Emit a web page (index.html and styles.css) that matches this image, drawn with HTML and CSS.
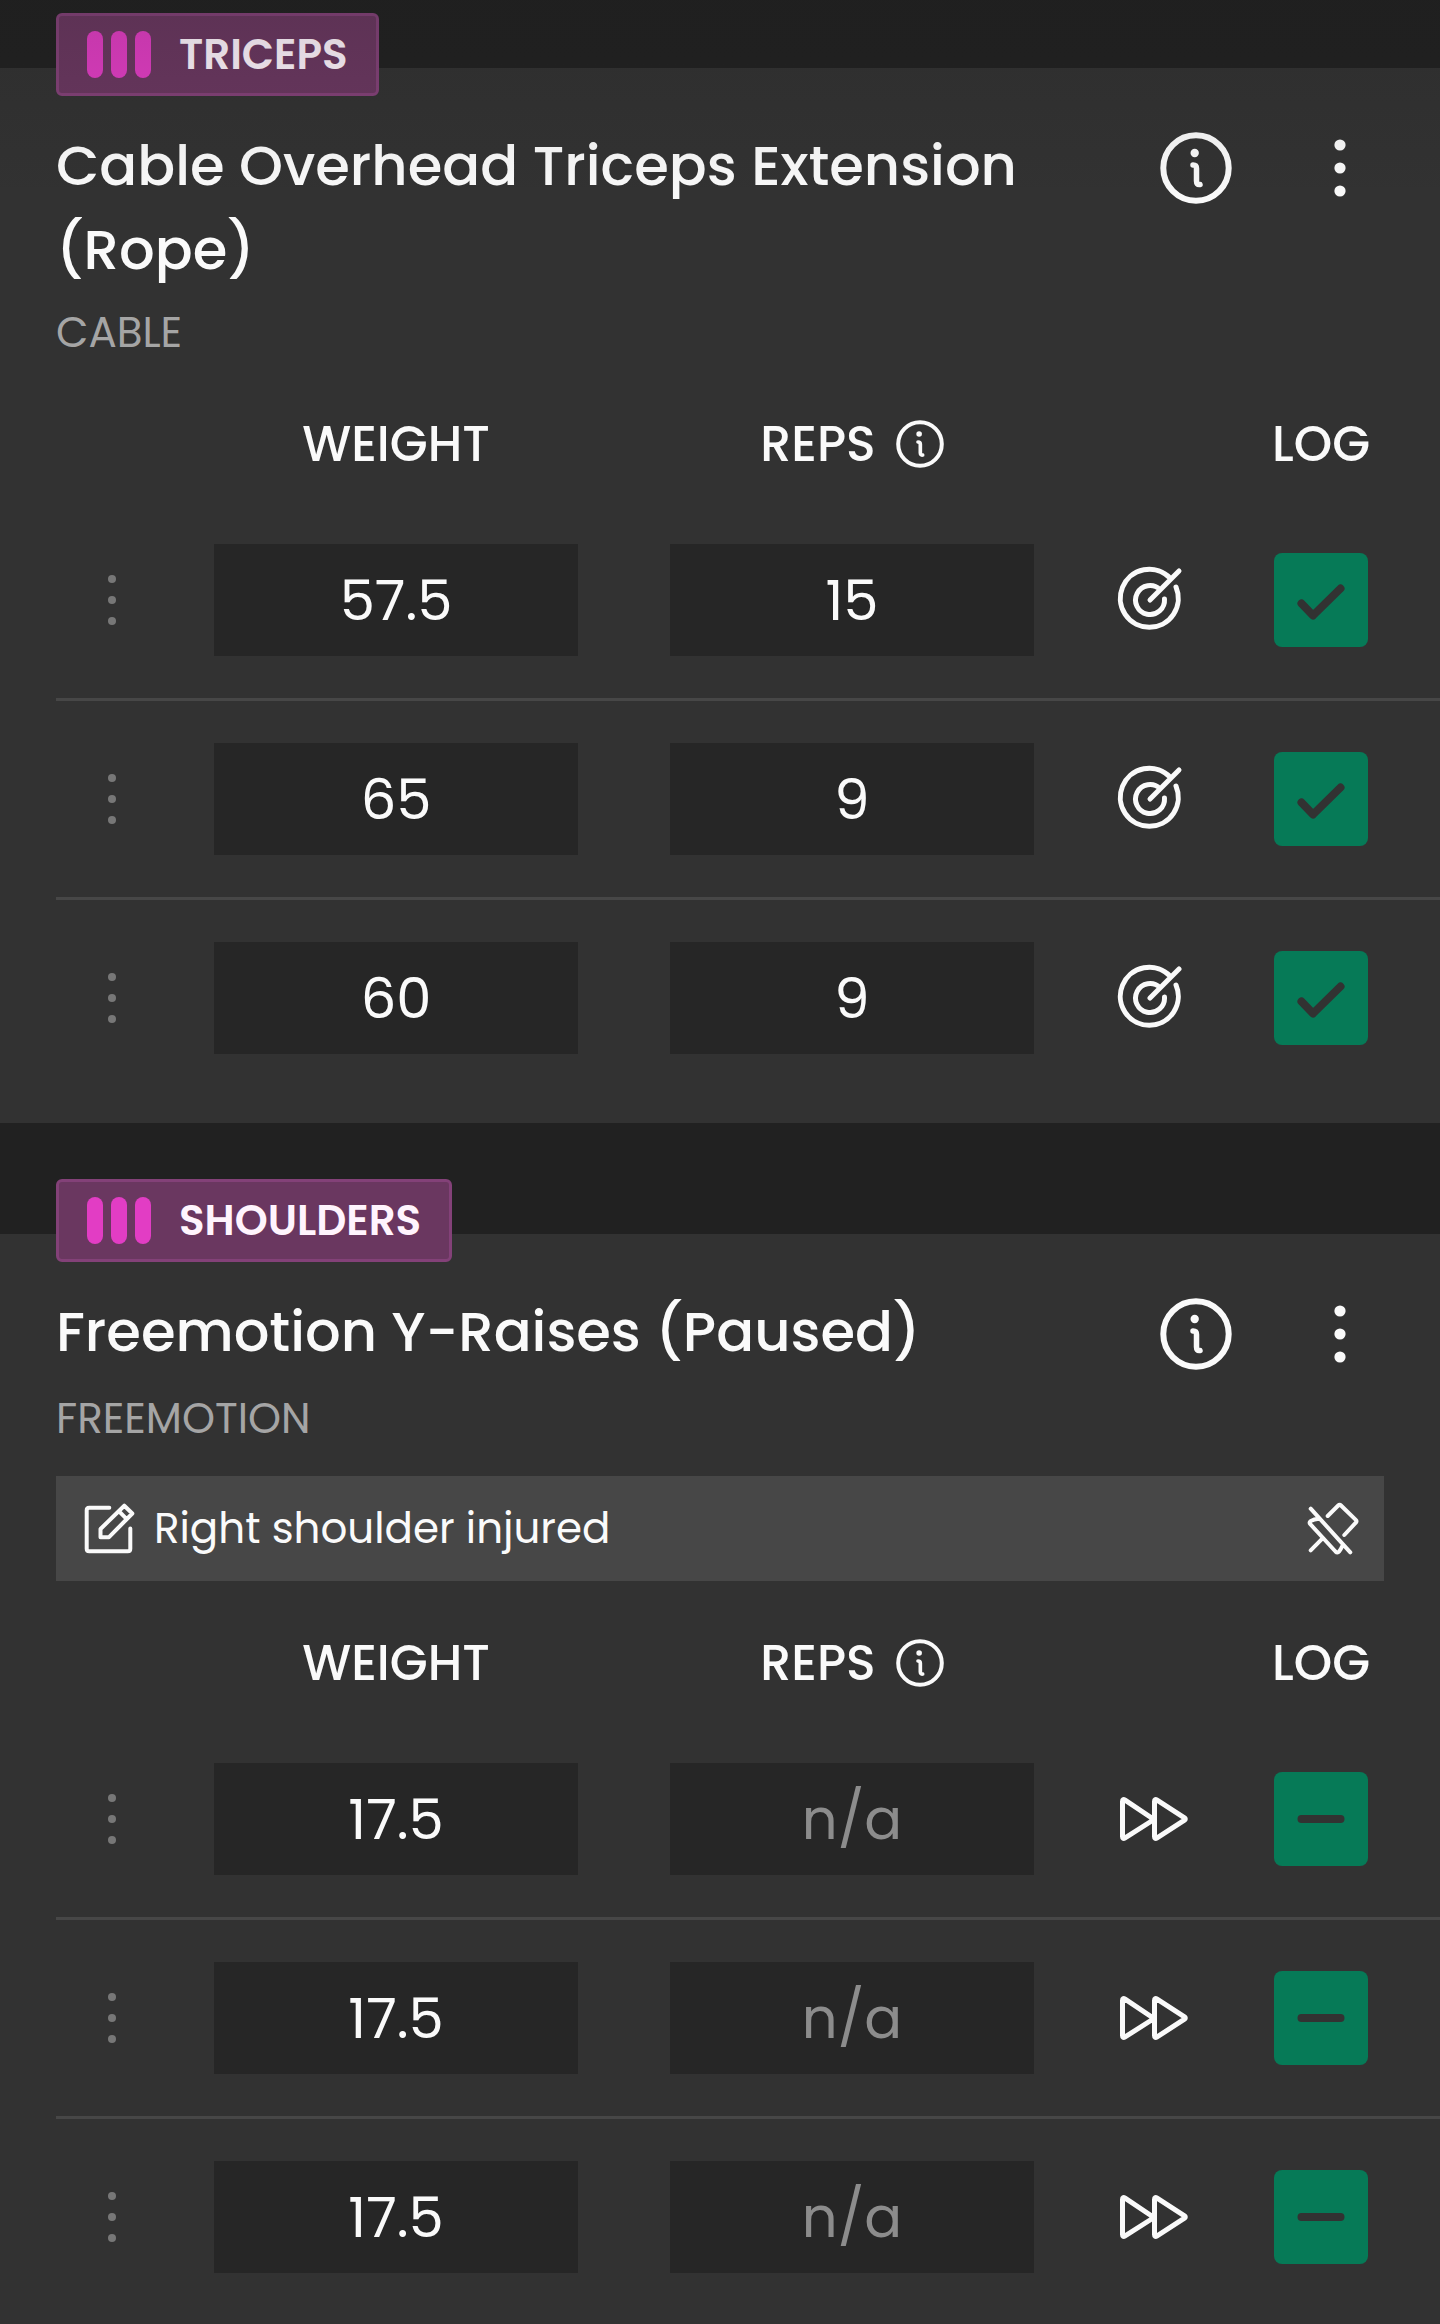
FILE: index.html
```html
<!DOCTYPE html>
<html lang="en">
<head>
    <meta charset="UTF-8">
    <meta name="viewport" content="width=device-width, initial-scale=1.0">
    <title>Workout</title>
    <link rel="stylesheet" href="styles.css">
</head>
<body>
    <!-- Icon sprite -->
    <svg class="sprite" aria-hidden="true">
        <symbol id="info" viewBox="0 0 72 72">
            <circle cx="36" cy="36" r="32.7" stroke-width="6"/>
            <circle cx="34.7" cy="21" r="4.2" fill="currentColor" stroke="none"/>
            <path d="M33 33c2.500 0 3.500.8 3.500 3.500v12.500c0 2.500 1 4 3.500 3.500" stroke-width="5.500"/>
        </symbol>
        <symbol id="dots" viewBox="0 0 72 72">
            <g fill="currentColor" stroke="none">
                <circle cx="36" cy="13" r="5.600"/>
                <circle cx="36" cy="36" r="5.600"/>
                <circle cx="36" cy="59" r="5.600"/>
            </g>
        </symbol>
        <symbol id="target" viewBox="0 0 80 80">
            <path d="M60 18A29 29 0 1 0 66 27M50 29.500A14.500 14.500 0 1 0 54.500 39M40 40L69 11" stroke-width="5"/>
        </symbol>
        <symbol id="forward" viewBox="0 0 80 80">
            <path d="M12.500 22.500v35q0 3 2.600 1.400L44 40.500 15.100 21.100q-2.600-1.600-2.600 1.400zM44.500 22.500v35q0 3 2.600 1.400L74.500 41.200q1.600-1.200 0-2.400L47.100 21.100q-2.600-1.600-2.600 1.400z" stroke-width="5"/>
        </symbol>
        <symbol id="check" viewBox="0 0 94 94">
            <path d="M27.500 50.500L39 62.500 66.500 35.500" stroke-width="8"/>
        </symbol>
        <symbol id="minus" viewBox="0 0 94 94">
            <path d="M27.500 47h39" stroke-width="8"/>
        </symbol>
        <symbol id="edit" viewBox="0 0 56 56">
            <path d="M29.300 6.700H9.200q-2.500 0-2.500 2.500v38.600q0 2.500 2.500 2.500h38.600q2.500 0 2.500-2.500V27.500M44.300 4.700l8 7.800L29 36.200H20.500V28zM38.800 10.200l8 8" stroke-width="4"/>
        </symbol>
        <symbol id="unpin" viewBox="0 0 56 56">
            <path d="M6.700 7.700L46.300 51.300M23.700 15L34.200 4.500q1.400-1.400 2.800 0L51.800 18.900q1.500 1.400 0 2.800L40.300 34M15 17.700q-5 .2-8.500 2.500-1.700 1.400-.2 3L31.500 50.500q2 2 3.600 0Q37 48 38.300 45M18.300 37.700L6.700 49.300" stroke-width="4"/>
        </symbol>
    </svg>

    <main class="workout">
        <section class="card">
            <div class="badge">
                <span class="bars"><i></i><i></i><i></i></span>
                <span>TRICEPS</span>
            </div>
            <div class="card-header">
                <h2>Cable Overhead Triceps Extension (Rope)</h2>
                <div class="actions">
                    <button type="button" aria-label="Exercise info"><svg class="icon"><use href="#info"/></svg></button>
                    <button type="button" aria-label="More options"><svg class="icon"><use href="#dots"/></svg></button>
                </div>
            </div>
            <p class="equipment">CABLE</p>
            <table class="sets">
                <thead>
                    <tr>
                        <th class="col-handle"></th>
                        <th>WEIGHT</th>
                        <th><span class="reps-head">REPS <button type="button" aria-label="Reps info"><svg class="icon-small"><use href="#info"/></svg></button></span></th>
                        <th class="col-status"></th>
                        <th class="col-log">LOG</th>
                    </tr>
                </thead>
                <tbody>
                    <tr>
                        <td><button type="button" class="handle" aria-label="Set options"><i></i><i></i><i></i></button></td>
                        <td><input class="value" type="text" aria-label="Weight" value="57.5"></td>
                        <td><input class="value" type="text" aria-label="Reps" value="15"></td>
                        <td><svg class="status"><use href="#target"/></svg></td>
                        <td class="col-log"><label class="log"><input type="checkbox" aria-label="Log set" checked><svg><use href="#check"/></svg></label></td>
                    </tr>
                    <tr>
                        <td><button type="button" class="handle" aria-label="Set options"><i></i><i></i><i></i></button></td>
                        <td><input class="value" type="text" aria-label="Weight" value="65"></td>
                        <td><input class="value" type="text" aria-label="Reps" value="9"></td>
                        <td><svg class="status"><use href="#target"/></svg></td>
                        <td class="col-log"><label class="log"><input type="checkbox" aria-label="Log set" checked><svg><use href="#check"/></svg></label></td>
                    </tr>
                    <tr>
                        <td><button type="button" class="handle" aria-label="Set options"><i></i><i></i><i></i></button></td>
                        <td><input class="value" type="text" aria-label="Weight" value="60"></td>
                        <td><input class="value" type="text" aria-label="Reps" value="9"></td>
                        <td><svg class="status"><use href="#target"/></svg></td>
                        <td class="col-log"><label class="log"><input type="checkbox" aria-label="Log set" checked><svg><use href="#check"/></svg></label></td>
                    </tr>
                </tbody>
            </table>
        </section>

        <section class="card">
            <div class="badge">
                <span class="bars"><i></i><i></i><i></i></span>
                <span>SHOULDERS</span>
            </div>
            <div class="card-header">
                <h2>Freemotion Y-Raises (Paused)</h2>
                <div class="actions">
                    <button type="button" aria-label="Exercise info"><svg class="icon"><use href="#info"/></svg></button>
                    <button type="button" aria-label="More options"><svg class="icon"><use href="#dots"/></svg></button>
                </div>
            </div>
            <p class="equipment">FREEMOTION</p>
            <div class="note">
                <button type="button" aria-label="Edit note"><svg class="icon-note"><use href="#edit"/></svg></button>
                <span class="note-text">Right shoulder injured</span>
                <button type="button" aria-label="Unpin note"><svg class="icon-note"><use href="#unpin"/></svg></button>
            </div>
            <table class="sets">
                <thead>
                    <tr>
                        <th class="col-handle"></th>
                        <th>WEIGHT</th>
                        <th><span class="reps-head">REPS <button type="button" aria-label="Reps info"><svg class="icon-small"><use href="#info"/></svg></button></span></th>
                        <th class="col-status"></th>
                        <th class="col-log">LOG</th>
                    </tr>
                </thead>
                <tbody>
                    <tr>
                        <td><button type="button" class="handle" aria-label="Set options"><i></i><i></i><i></i></button></td>
                        <td><input class="value" type="text" aria-label="Weight" value="17.5"></td>
                        <td><input class="value" type="text" aria-label="Reps" placeholder="n/a"></td>
                        <td><svg class="status"><use href="#forward"/></svg></td>
                        <td class="col-log"><label class="log"><input type="checkbox" aria-label="Log set" checked><svg><use href="#minus"/></svg></label></td>
                    </tr>
                    <tr>
                        <td><button type="button" class="handle" aria-label="Set options"><i></i><i></i><i></i></button></td>
                        <td><input class="value" type="text" aria-label="Weight" value="17.5"></td>
                        <td><input class="value" type="text" aria-label="Reps" placeholder="n/a"></td>
                        <td><svg class="status"><use href="#forward"/></svg></td>
                        <td class="col-log"><label class="log"><input type="checkbox" aria-label="Log set" checked><svg><use href="#minus"/></svg></label></td>
                    </tr>
                    <tr>
                        <td><button type="button" class="handle" aria-label="Set options"><i></i><i></i><i></i></button></td>
                        <td><input class="value" type="text" aria-label="Weight" value="17.5"></td>
                        <td><input class="value" type="text" aria-label="Reps" placeholder="n/a"></td>
                        <td><svg class="status"><use href="#forward"/></svg></td>
                        <td class="col-log"><label class="log"><input type="checkbox" aria-label="Log set" checked><svg><use href="#minus"/></svg></label></td>
                    </tr>
                </tbody>
            </table>
        </section>
    </main>
</body>
</html>
```
FILE: styles.css
```css
* {
    box-sizing: border-box;
}

body {
    margin: 0;
    background-color: #212121;
    color: #fafafa;
    font-family: Poppins, Inter, sans-serif;
}

/* shade at the top of the scrolled list */
body::before {
    content: "";
    position: absolute;
    top: 0;
    left: 0;
    right: 0;
    height: 200px;
    background: linear-gradient(rgba(24, 24, 24, 0.16), rgba(24, 24, 24, 0));
    z-index: 1;
    pointer-events: none;
}

button {
    display: flex;
    align-items: center;
    justify-content: center;
    padding: 0;
    border: none;
    background: none;
    color: inherit;
    cursor: pointer;
}

svg {
    display: block;
    fill: none;
    stroke: currentColor;
    stroke-linecap: round;
    stroke-linejoin: round;
}

.sprite {
    position: absolute;
    width: 0;
    height: 0;
}

.workout {
    display: flex;
    flex-direction: column;
    gap: 111px;
    min-height: 100vh;
    padding-top: 68px;
}

.card {
    background-color: #323232;
    padding: 0 0 27px 56px;
}

.card:last-child {
    flex: 1;
    padding-bottom: 0;
}

.badge {
    display: flex;
    align-items: center;
    gap: 28px;
    width: fit-content;
    height: 83px;
    margin-top: -55px;
    padding: 0 28px;
    border: 3px solid #834178;
    border-radius: 6px;
    background-color: #6a3760;
    color: #fff4fd;
    font-size: 42px;
    font-weight: 600;
}

.bars {
    display: flex;
    gap: 8px;
}

.bars i {
    width: 16px;
    height: 47px;
    border-radius: 8px;
    background-color: #e23dc4;
}

.card-header {
    display: flex;
    align-items: flex-start;
    justify-content: space-between;
    gap: 56px;
    padding: 28px 56px 0 0;
}

h2 {
    margin: 0;
    font-size: 56px;
    font-weight: 500;
    line-height: 84px;
}

.actions {
    display: flex;
    gap: 56px;
}

.actions button {
    width: 88px;
    height: 88px;
}

.icon {
    width: 72px;
    height: 72px;
}

.equipment {
    margin: 8px 0 20px;
    color: #a5a5a5;
    font-size: 42px;
    line-height: 66px;
}

.note {
    display: flex;
    align-items: center;
    gap: 18px;
    height: 105px;
    margin: 24px 56px 24px 0;
    padding: 0 24px;
    background-color: #474747;
    font-size: 42px;
}

.note-text {
    flex: 1;
}

.icon-note {
    width: 56px;
    height: 56px;
}

.sets {
    width: 100%;
    table-layout: fixed;
    border-spacing: 0;
}

th {
    height: 116px;
    padding: 0;
    font-size: 49px;
    font-weight: 500;
}

.reps-head {
    display: flex;
    align-items: center;
    justify-content: center;
    gap: 20px;
}

.icon-small {
    width: 48px;
    height: 48px;
}

.col-handle {
    width: 112px;
}

.col-status {
    width: 140px;
}

th.col-log {
    width: 220px;
    padding-right: 18px;
}

td {
    padding: 42px 0;
    border-bottom: 3px solid #474747;
}

td.col-log {
    padding-right: 18px;
}

tbody tr:last-child td {
    border-bottom: none;
}

td:nth-child(2),
td:nth-child(3) {
    padding-left: 46px;
    padding-right: 46px;
}

.handle {
    flex-direction: column;
    gap: 13px;
    width: 100%;
    color: #777;
}

.handle i {
    width: 8px;
    height: 8px;
    border-radius: 50%;
    background-color: currentColor;
}

.value {
    display: block;
    width: 100%;
    height: 112px;
    padding: 0;
    border: none;
    background-color: #262626;
    color: #fafafa;
    font-family: inherit;
    font-size: 56px;
    text-align: center;
}

.value::placeholder {
    color: #8c8c8c;
    opacity: 1;
}

.status {
    width: 80px;
    height: 80px;
    margin: 0 auto;
}

.log {
    display: grid;
    width: 94px;
    height: 94px;
    margin: 0 auto;
    color: #323232;
    cursor: pointer;
}

.log input,
.log svg {
    grid-area: 1 / 1;
    width: 94px;
    height: 94px;
    margin: 0;
}

.log input {
    appearance: none;
    border-radius: 8px;
    background-color: #067a57;
}
```
